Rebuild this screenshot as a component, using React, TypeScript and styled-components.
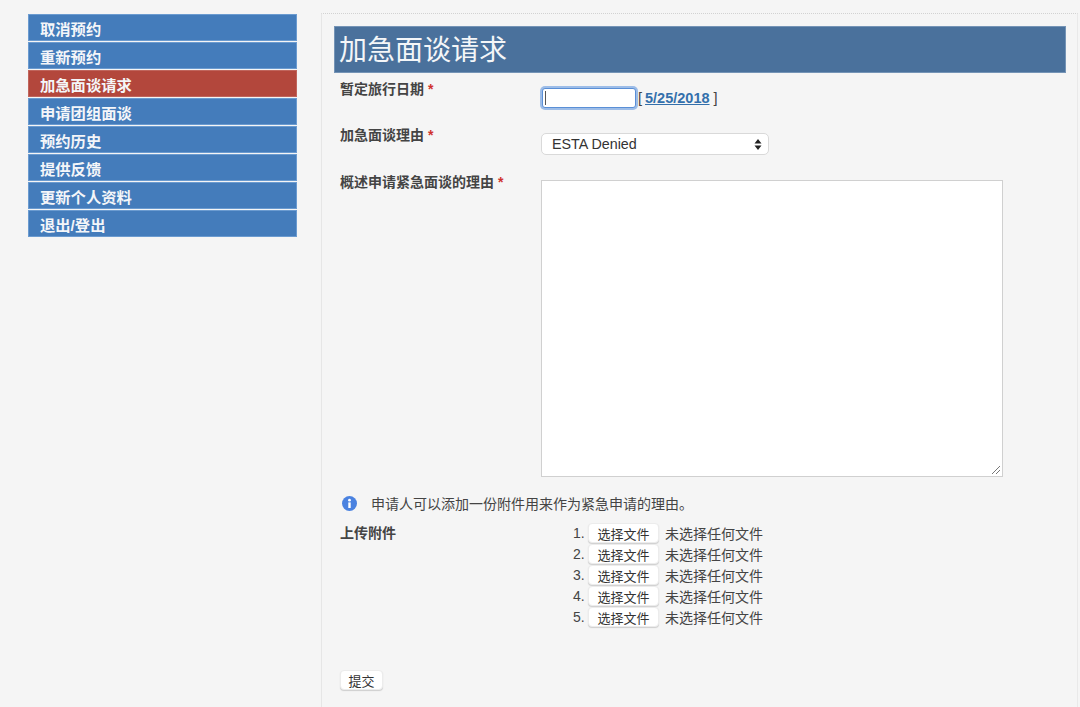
import styled, { createGlobalStyle } from 'styled-components';

const GlobalStyle = createGlobalStyle`
  html, body {
    margin: 0;
    height: 100%;
    background: #f5f5f5;
    overflow: hidden;
  }
  body {
    font-family: "Liberation Sans", "Noto Sans CJK SC", sans-serif;
    color: #333;
  }
`;

const Page = styled.div`
  display: flex;
  align-items: flex-start;
  gap: 24px;
  width: 1080px;
  height: 707px;
  padding: 13px 2px 0 28px;
  box-sizing: border-box;
`;

const Nav = styled.nav`
  width: 269px;
  flex: none;
  margin-top: 1px;
  display: flex;
  flex-direction: column;
  gap: 1px;
`;

const NavItem = styled.a<{ $active?: boolean }>`
  display: block;
  height: 27px;
  line-height: 29px;
  padding-left: 11px;
  box-sizing: border-box;
  border: 1px solid ${p => (p.$active ? '#c0655c' : '#6b9bd0')};
  background: ${p => (p.$active ? '#b3473c' : '#447cbb')};
  color: #f4f6f9;
  font-size: 15.3px;
  font-weight: 700;
`;

const Panel = styled.main`
  flex: 1;
  height: 694px;
  padding: 12px 11px 0 12px;
  box-sizing: border-box;
  border-top: 1px dotted #d2d2d2;
  border-left: 1px solid #e6e6e6;
  border-right: 1px solid #e9e9e9;
`;

const Title = styled.h1`
  margin: 0;
  height: 47px;
  padding-left: 4px;
  box-sizing: border-box;
  background: #4a719c;
  border: 1px solid #7594b6;
  color: #f4f6f8;
  font-size: 28px;
  font-weight: 400;
  line-height: 47px;
`;

const Form = styled.form`
  padding: 7px 0 0 6px;
`;

const Row = styled.div<{ $height: number }>`
  display: grid;
  grid-template-columns: 201px 1fr;
  height: ${p => p.$height}px;
`;

const Label = styled.label`
  font-size: 14px;
  font-weight: 700;
  color: #444;
  line-height: 18px;
`;

const Required = styled.span`
  color: #d0312d;
  margin-left: 4px;
`;

const DateCell = styled.div`
  display: flex;
  align-items: center;
  height: 22px;
  margin-top: 7px;
  font-size: 14.5px;
  color: #444;
`;

const DateInput = styled.input`
  width: 94px;
  height: 20px;
  padding: 0;
  margin: 0 2px 0 1px;
  box-sizing: border-box;
  border: 1px solid #5a8fd6;
  border-radius: 3px;
  background: linear-gradient(#555, #555) 2px center / 1px 14px no-repeat, #fff;
  box-shadow: 0 0 0 2px #9dbde8;
  outline: none;
`;

const DateLink = styled.a`
  color: #3470ac;
  font-weight: 700;
  text-decoration: underline;
  margin: 0 4px 0 3px;
`;

const SelectBox = styled.div`
  width: 228px;
  height: 22px;
  margin-top: 7px;
  padding: 0 6px 0 10px;
  box-sizing: border-box;
  display: flex;
  align-items: center;
  justify-content: space-between;
  background: #fff;
  border: 1px solid #d9d9d9;
  border-radius: 5px;
  font-size: 14.3px;
  color: #333;
`;

const TextArea = styled.div`
  position: relative;
  width: 462px;
  height: 297px;
  margin-top: 7px;
  box-sizing: border-box;
  background: #fff;
  border: 1px solid #d0d0d0;
`;

const ResizeGrip = styled.svg`
  position: absolute;
  right: 1px;
  bottom: 1px;
`;

const Note = styled.div`
  display: flex;
  align-items: center;
  gap: 14px;
  height: 20px;
  margin-top: 17px;
  padding-left: 2px;
  font-size: 14px;
  color: #444;
`;

const UploadRow = styled.div`
  display: grid;
  grid-template-columns: 233px 1fr;
  margin-top: 11px;
  height: 146px;
`;

const FileList = styled.ol`
  list-style: none;
  margin: -2px 0 0;
  padding: 0;
`;

const FileItem = styled.li`
  display: flex;
  align-items: center;
  height: 21px;
  font-size: 14px;
  color: #444;
`;

const Index = styled.span`
  width: 15px;
`;

const FileButton = styled.button`
  width: 71px;
  height: 20px;
  padding: 0;
  margin-right: 6px;
  font: inherit;
  font-size: 13px;
  color: #333;
  background: #fff;
  border: 1px solid #ececec;
  border-radius: 4px;
  box-shadow: 0 1px 1px rgba(0, 0, 0, 0.16);
`;

const SubmitButton = styled(FileButton)`
  width: 43px;
  height: 20px;
`;

const navItems = ['取消预约', '重新预约', '加急面谈请求', '申请团组面谈', '预约历史', '提供反馈', '更新个人资料', '退出/登出'];

export default function App() {
  return (
    <Page>
      <GlobalStyle />
      <Nav>
        {navItems.map(item => (
          <NavItem key={item} $active={item === '加急面谈请求'}>
            {item}
          </NavItem>
        ))}
      </Nav>
      <Panel>
        <Title>加急面谈请求</Title>
        <Form>
          <Row $height={46}>
            <Label>
              暂定旅行日期<Required>*</Required>
            </Label>
            <DateCell>
              <DateInput />[<DateLink>5/25/2018</DateLink>]
            </DateCell>
          </Row>
          <Row $height={47}>
            <Label>
              加急面谈理由<Required>*</Required>
            </Label>
            <SelectBox>
              ESTA Denied
              <svg width="8" height="13" viewBox="0 0 8 13">
                <path d="M4 1 7.5 5.5H.5zM4 12 .5 7.5h7z" fill="#222" />
              </svg>
            </SelectBox>
          </Row>
          <Row $height={303}>
            <Label>
              概述申请紧急面谈的理由<Required>*</Required>
            </Label>
            <TextArea>
              <ResizeGrip width="10" height="10" viewBox="0 0 10 10">
                <path d="M1 9 9 1M5 9 9 5" stroke="#777" fill="none" />
              </ResizeGrip>
            </TextArea>
          </Row>
          <Note>
            <svg width="15" height="15" viewBox="0 0 15 15">
              <circle cx="7.5" cy="7.5" r="7.5" fill="#4a82e0" />
              <rect x="6.3" y="6.4" width="2.4" height="5.6" fill="#fff" />
              <circle cx="7.5" cy="4.2" r="1.4" fill="#fff" />
            </svg>
            申请人可以添加一份附件用来作为紧急申请的理由。
          </Note>
          <UploadRow>
            <Label>上传附件</Label>
            <FileList>
              {[1, 2, 3, 4, 5].map(n => (
                <FileItem key={n}>
                  <Index>{n}.</Index>
                  <FileButton type="button">选择文件</FileButton>
                  未选择任何文件
                </FileItem>
              ))}
            </FileList>
          </UploadRow>
          <SubmitButton type="button">提交</SubmitButton>
        </Form>
      </Panel>
    </Page>
  );
}
